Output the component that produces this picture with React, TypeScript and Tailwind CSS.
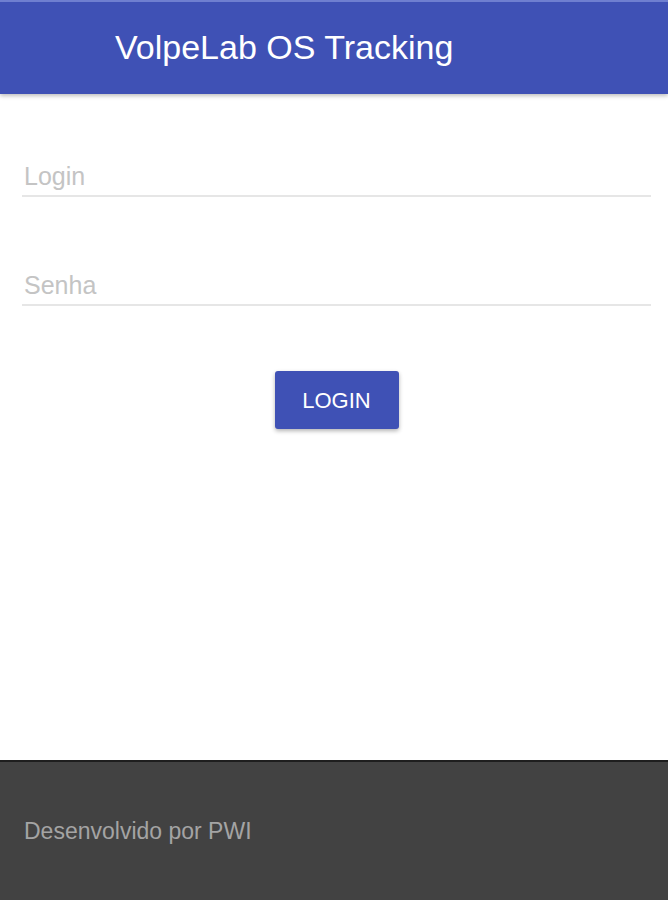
export default function App() {
  return (
    <div
      className="w-[668px] h-[900px] flex flex-col bg-white"
      style={{ fontFamily: '"Liberation Sans", Arial, sans-serif' }}
    >
      <header className="h-[94px] shrink-0 bg-[#3f51b5] border-t-2 border-[#6f7fd0] flex items-center pl-[115px] shadow-[0_2px_4px_rgba(0,0,0,0.25)]">
        <h1 className="text-[34px] text-white leading-none -mt-[2px]">VolpeLab OS Tracking</h1>
      </header>
      <main className="flex-1 flex flex-col pl-[22px] pr-[17px]">
        <div className="mt-[58px] border-b-2 border-[#e6e6e6] h-[45px] flex items-end pb-[4px]">
          <input
            placeholder="Login"
            className="w-full outline-none text-[25px] leading-none text-gray-700 placeholder:text-[#c4c4c4] pl-[2px]"
          />
        </div>
        <div className="mt-[64px] border-b-2 border-[#e6e6e6] h-[45px] flex items-end pb-[4px]">
          <input
            type="password"
            placeholder="Senha"
            className="w-full outline-none text-[25px] leading-none text-gray-700 placeholder:text-[#c4c4c4] pl-[2px]"
          />
        </div>
        <div className="flex justify-center mt-[65px]">
          <button className="w-[124px] h-[58px] bg-[#3f51b5] text-white text-[22px] rounded-[3px] shadow-[0_2px_4px_rgba(0,0,0,0.3)]">
            LOGIN
          </button>
        </div>
      </main>
      <footer className="h-[140px] shrink-0 bg-[#424242] border-t-2 border-[#1e1e1e] flex items-center pl-[24px]">
        <span className="text-[23px] text-[#a4a4a4]">Desenvolvido por PWI</span>
      </footer>
    </div>
  );
}
